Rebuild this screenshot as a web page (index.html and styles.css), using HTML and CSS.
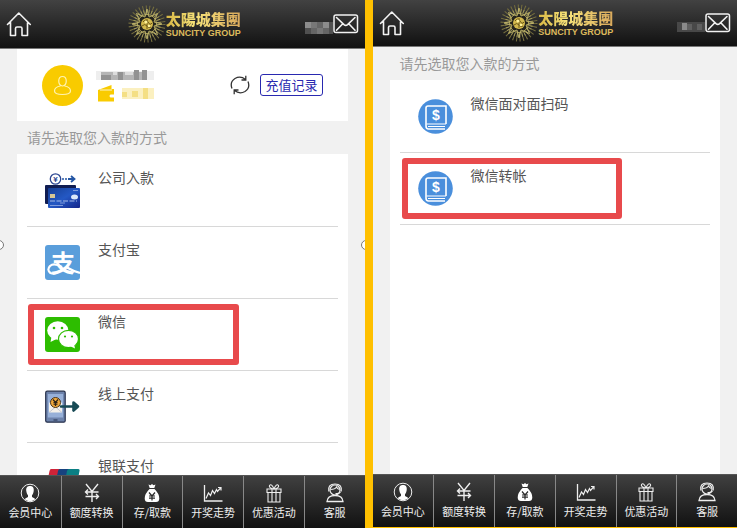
FILE: index.html
```
<!DOCTYPE html>
<html lang="zh-CN">
<head>
	<meta charset="utf-8">
	<meta name="viewport" content="width=device-width, initial-scale=1">
	<title>太陽城集團</title>
	<link rel="stylesheet" href="styles.css">
</head>
<body>
	<!-- shared icons -->
	<svg class="sprite" aria-hidden="true">
		<defs>
			<linearGradient id="card-blue" x1="0" y1="0" x2="1" y2="1">
				<stop offset="0" stop-color="#163f94"/>
				<stop offset="0.5" stop-color="#2458c4"/>
				<stop offset="1" stop-color="#15258a"/>
			</linearGradient>
		</defs>
		<symbol id="home" viewBox="0 0 26 26">
			<path d="M1.5 13.5L12.8 2L24.3 13.5M4.5 11.5V24.5H9.5V17.5Q9.5 16 11 16H14.5Q16 16 16 17.5V24.5H21.5V11.5" fill="none" stroke="#f2f2f2" stroke-width="1.6" stroke-linejoin="round" stroke-linecap="round"/>
		</symbol>
		<symbol id="mail" viewBox="0 0 26 20">
			<rect x="1" y="1" width="23.5" height="17.5" rx="2" fill="none" stroke="#f2f2f2" stroke-width="1.5"/>
			<path d="M3.5 3.5L11 10.6Q12.800 12.200 14.600 10.600L22 3.500M3.500 16.300L9.800 9.800M22 16.300L15.800 9.800" fill="none" stroke="#f2f2f2" stroke-width="1.6" stroke-linecap="round"/>
		</symbol>
		<symbol id="sun" viewBox="0 0 38 38">
			<circle cx="19" cy="19" r="14.500" fill="none" stroke="#756e3e" stroke-width="8" stroke-dasharray="0.900 2.137"/>
			<circle cx="19" cy="19" r="12" fill="none" stroke="#a39a5a" stroke-width="4" stroke-dasharray="0.900 1.613"/>
			<circle cx="19" cy="19" r="9.500" fill="#25241c" stroke="#b5a95f" stroke-width="1"/>
			<path d="M19 4L21 12L29.5 8.5L26 17L34 19L26 21L29.5 29.5L21 26L19 34L17 26L8.5 29.5L12 21L4 19L12 17L8.5 8.5L17 12Z" fill="none" stroke="#c3b86c" stroke-width="0.9"/>
			<circle cx="19" cy="19" r="6" fill="#d2b84c"/>
			<path d="M15 17Q18 13 20 17T24 18M14 21Q17 18 19 21T23 22M19 14V24" fill="none" stroke="#6a5617" stroke-width="1"/>
			<circle cx="18" cy="17" r="1.5" fill="#fff29a"/>
			<circle cx="21" cy="21" r="1.3" fill="#fff29a"/>
		</symbol>
		<symbol id="member" viewBox="0 0 20 20">
			<circle cx="10" cy="10" r="8.800" fill="none" stroke="#eee" stroke-width="1"/>
			<path d="M10 3C6.700 3 6 5.300 6.300 8C6.500 10 7.200 11.200 8 12.200V14L5.200 15.500V16.800Q10 19.500 14.800 16.800V15.500L12 14V12.200C12.800 11.200 13.500 10 13.700 8C14 5.300 13.300 3 10 3Z" fill="#fff"/>
		</symbol>
		<symbol id="exchange" viewBox="0 0 20 20">
			<path d="M4 1L10 8.500L16 1M3.500 9H16.500M3.500 13.500H16.500M10 8.500V19M6 6.500L3.500 9L6 11.500M14 11L16.500 13.500L14 16" fill="none" stroke="#eee" stroke-width="1.400"/>
		</symbol>
		<symbol id="bag" viewBox="0 0 20 20">
			<path d="M6.500 1.500L8.500 2.300L10 1L11.500 2.300L13.500 1.500L12.300 5H7.700Z" fill="#fff"/>
			<path d="M7.500 6H12.500Q17.500 11 17.300 15.500Q17.200 19 14 19H6Q2.800 19 2.700 15.500Q2.500 11 7.500 6Z" fill="#fff"/>
			<path d="M7 9.500L10 13L13 9.500M7 13H13M7 15.200H13M10 13V17.500" fill="none" stroke="#2a2a2a" stroke-width="1.200"/>
		</symbol>
		<symbol id="trend" viewBox="0 0 20 20">
			<path d="M1.500 2V18H19.500" fill="none" stroke="#eee" stroke-width="1.300"/>
			<path d="M3 15.500L5.500 10L7.500 12.500L9.500 7.500L11.500 10.500L13.500 6.500L14.500 8.500L18 4.500M15 4.500H18V7.500" fill="none" stroke="#eee" stroke-width="1.200"/>
		</symbol>
		<symbol id="gift" viewBox="0 0 20 20">
			<path d="M3 6H17V9.500H3ZM4 9.500V19H16V9.500M8 6V19M12 6V19M10 6Q4.500 5 5.500 2.500Q7.500 0 10 6Q12.500 0 14.500 2.500Q15.500 5 10 6" fill="none" stroke="#eee" stroke-width="1.100"/>
		</symbol>
		<symbol id="service" viewBox="0 0 20 20">
			<circle cx="10" cy="7" r="5" fill="none" stroke="#eee" stroke-width="1.200"/>
			<path d="M3.800 8.500Q2.500 1 10 1Q17.500 1 16.200 8.500M5.500 6.500Q10 6.500 11.500 4Q12.500 6 14.500 6.500M15.500 9Q14 11 10.500 10.500" fill="none" stroke="#eee" stroke-width="1.200"/>
			<path d="M2 18.500Q2.500 12.500 10 12.500Q17.500 12.500 18 18.500Z" fill="none" stroke="#eee" stroke-width="1.300"/>
		</symbol>
	</svg>

	<div class="screens">
		<div class="phone">
			<header class="topbar">
				<a href="#" aria-label="首页"><svg class="icon-home"><use href="#home"/></svg></a>
				<div class="logo">
					<svg class="logo-sun"><use href="#sun"/></svg>
					<div class="logo-text">
						<span class="logo-cn">太陽城集團</span>
						<span class="logo-en">SUNCITY GROUP</span>
					</div>
				</div>
				<a href="#" class="inbox" aria-label="消息">
					<svg class="mosaic-top" viewBox="0 0 28 12">
						<rect width="28" height="12" fill="#666"/>
						<path d="M0 0H6V6H0ZM18 0H24V6H18Z" fill="#8c8c8c"/>
						<path d="M6 0H12V6H6ZM12 6H18V12H12Z" fill="#777"/>
						<path d="M0 6H6V12H0ZM24 0H28V12H24Z" fill="#505050"/>
					</svg>
					<svg class="icon-mail"><use href="#mail"/></svg>
				</a>
			</header>

			<main class="content">
				<div class="card profile">
					<svg class="avatar" viewBox="0 0 41 41">
						<circle cx="20.500" cy="20.500" r="20.500" fill="#f9cb00"/>
						<path d="M20.500 11.500C15.500 11.500 15.500 20.500 20.500 21C25.500 20.500 25.500 11.500 20.500 11.500ZM18.500 21Q12.500 22 12.500 26Q12.500 29.500 20.500 29.500Q28.500 29.500 28.500 26Q28.500 22 22.500 21" fill="none" stroke="#fff3b0" stroke-width="1.200"/>
					</svg>
					<div class="account">
						<svg class="mosaic-name" viewBox="0 0 58 12">
							<rect x="0" y="2" width="58" height="9" fill="#eee"/>
							<rect x="5" y="3" width="46" height="8" fill="#b5b5b5"/>
							<path d="M5 6H15V11H5ZM22 3H27V11H22ZM38 1H43V11H38ZM46 1H51V11H46Z" fill="#929292"/>
							<path d="M17 3H21V6H17ZM29 3H37V6H29Z" fill="#dcdcdc"/>
						</svg>
						<div class="balance">
							<svg class="wallet" viewBox="0 0 17 17">
								<path d="M0 5L13.500 0V4H16V9.500H12.500Q10.500 11 12.500 12.500H16V16.500H0Z" fill="#f9cb00"/>
								<path d="M2 5H14" stroke="#fff" stroke-width="0.800"/>
							</svg>
							<svg class="mosaic-amount" viewBox="0 0 32 11">
								<rect width="32" height="11" fill="#fbf0c0"/>
								<path d="M0 4H5V9H0ZM10 3H16V9H10ZM21 0H26V11H21Z" fill="#f4df84"/>
							</svg>
						</div>
					</div>
					<button type="button" class="refresh" aria-label="刷新">
						<svg viewBox="0 0 20 20">
							<path d="M2 13.500Q-0.500 7 5 3.500Q10.500 0.500 15.500 4.500M15.800 0.800V5H11.500M18 6.500Q20.500 13 15 16.500Q9.500 19.500 4.500 15.500M4.200 19.200V15H8.500" fill="none" stroke="#333" stroke-width="1.300"/>
						</svg>
					</button>
					<button type="button" class="record">充值记录</button>
				</div>

				<h2 class="tip">请先选取您入款的方式</h2>

				<ul class="card list">
					<li>
						<a href="#">
							<svg class="pay-icon" viewBox="0 0 35 35">
								<circle cx="10.500" cy="6" r="5.200" fill="#fff" stroke="#2c4691" stroke-width="1.300"/>
								<text x="10.500" y="9" text-anchor="middle" class="icon-yen">¥</text>
								<path d="M17 6H23" fill="none" stroke="#2456a4" stroke-width="1.500" stroke-dasharray="2 1"/>
								<path d="M23 6H29M26 3L29.500 6L26 9" fill="none" stroke="#2456a4" stroke-width="1.800"/>
								<rect x="0" y="12" width="31" height="19" rx="1" fill="#101d52"/>
								<rect x="3" y="15" width="32" height="20" rx="1" fill="url(#card-blue)"/>
								<rect x="5" y="21" width="5" height="4" fill="#d6c695"/>
								<ellipse cx="29.500" cy="24" rx="3.500" ry="2.500" fill="#dce8fa"/>
								<path d="M5 28H32" stroke="#a9bce8" stroke-width="1.200" stroke-dasharray="5 1.500"/>
								<path d="M5 32.500H18M28 17.500H33M15 30H20" stroke="#8aa4df" stroke-width="0.900"/>
							</svg>
							<span>公司入款</span>
						</a>
					</li>
					<li>
						<a href="#">
							<svg class="pay-icon" viewBox="0 0 35 35">
								<rect width="35" height="35" rx="3" fill="#5a9edb"/>
								<text x="18" y="27" text-anchor="middle" class="icon-zhi">支</text>
								<path d="M17 22Q9 17.500 5 21Q1.500 25 5.500 28Q10 30 15 26M22 22.500Q28 26 35 28" fill="none" stroke="#fff" stroke-width="2.200"/>
							</svg>
							<span>支付宝</span>
						</a>
					</li>
					<li>
						<a href="#">
							<svg class="pay-icon" viewBox="0 0 35 35">
								<rect width="35" height="35" rx="3" fill="#2dbd00"/>
								<ellipse cx="12.800" cy="13.500" rx="10.600" ry="9.200" fill="#fff"/>
								<path d="M6.500 19.500L5.500 25L11.500 22Z" fill="#fff"/>
								<ellipse cx="23.500" cy="22" rx="10" ry="8.700" fill="#fff" stroke="#2dbd00" stroke-width="1.200"/>
								<path d="M25 29L30 31.500L29 27Z" fill="#fff"/>
								<circle cx="9" cy="11" r="1.300" fill="#2dbd00"/>
								<circle cx="17" cy="11" r="1.300" fill="#2dbd00"/>
								<circle cx="20" cy="19.500" r="1.100" fill="#2dbd00"/>
								<circle cx="27" cy="19.500" r="1.100" fill="#2dbd00"/>
							</svg>
							<span>微信</span>
						</a>
						<div class="mark"></div>
					</li>
					<li>
						<a href="#">
							<svg class="pay-icon" viewBox="0 0 35 35">
								<rect x="0.700" y="2.200" width="19.500" height="31" rx="1.500" fill="#6d83ac" stroke="#27304b" stroke-width="1.200"/>
								<rect x="2.800" y="5" width="15.300" height="23.500" fill="#97b0d8"/>
								<path d="M4 14L10.500 9L17 14V23.500H4Z" fill="#f4f1ea"/>
								<path d="M4 23.500L10.500 18L17 23.500" fill="none" stroke="#b9bccb" stroke-width="0.800"/>
								<circle cx="10.500" cy="13.500" r="5" fill="#f0a83c" stroke="#47331c" stroke-width="1"/>
								<path d="M8 10.500L10.500 13.500L13 10.500M8.500 13.500H12.500M8.500 15.200H12.500M10.500 13.500V17" fill="none" stroke="#2c2318" stroke-width="1.200"/>
								<path d="M16 17.500H33M28.500 13.500L33 17.500L28.500 21.500Z" fill="#174a55" stroke="#174a55" stroke-width="2.600" stroke-linejoin="round" stroke-linecap="round"/>
								<path d="M8.500 31H12.500" stroke="#27304b" stroke-width="1"/>
							</svg>
							<span>线上支付</span>
						</a>
					</li>
					<li>
						<a href="#">
							<svg class="pay-icon" viewBox="0 0 35 35">
								<path d="M6 8H16L11 30H2Q0 30 1 27L4.500 10Q5 8 6 8Z" fill="#cf2338"/>
								<path d="M15 8H25L20 30H9L13 10Q13.500 8 15 8Z" fill="#17427f"/>
								<path d="M24 8H33Q35 8 34.500 10L31 28Q30.500 30 29 30H18L22 10Q22.500 8 24 8Z" fill="#0b7f84"/>
							</svg>
							<span>银联支付</span>
						</a>
					</li>
				</ul>
			</main>

			<nav class="tabbar">
				<a href="#"><svg><use href="#member"/></svg>会员中心</a>
				<a href="#"><svg><use href="#exchange"/></svg>额度转换</a>
				<a href="#"><svg><use href="#bag"/></svg>存/取款</a>
				<a href="#"><svg><use href="#trend"/></svg>开奖走势</a>
				<a href="#"><svg><use href="#gift"/></svg>优惠活动</a>
				<a href="#"><svg><use href="#service"/></svg>客服</a>
			</nav>

			<i class="handle handle-left"></i>
			<i class="handle handle-right"></i>
		</div>

		<div class="phone phone-second">
			<header class="topbar">
				<a href="#" aria-label="首页"><svg class="icon-home"><use href="#home"/></svg></a>
				<div class="logo">
					<svg class="logo-sun"><use href="#sun"/></svg>
					<div class="logo-text">
						<span class="logo-cn">太陽城集團</span>
						<span class="logo-en">SUNCITY GROUP</span>
					</div>
				</div>
				<a href="#" class="inbox" aria-label="消息">
					<svg class="mosaic-top" viewBox="0 0 28 12">
						<rect y="1" width="28" height="10" fill="#484848"/>
						<path d="M5 2H10V9H5Z" fill="#8a8a8a"/>
						<path d="M10 3H15V9H10ZM20 3H25V9H20Z" fill="#606060"/>
					</svg>
					<svg class="icon-mail"><use href="#mail"/></svg>
				</a>
			</header>

			<main class="content">
				<h2 class="tip">请先选取您入款的方式</h2>

				<ul class="card list">
					<li>
						<a href="#">
							<svg class="pay-icon" viewBox="0 0 35 35">
								<circle cx="17.500" cy="17.500" r="17.300" fill="#4a8fdc"/>
								<path d="M28 25V7H10Q8 7 8 9V27Q8 30 10.500 30H27" fill="none" stroke="#fff" stroke-width="1.600"/>
								<path d="M8.500 25H28M10 27.500H27" fill="none" stroke="#fff" stroke-width="1.100"/>
								<text x="18" y="21" text-anchor="middle" class="icon-dollar">$</text>
							</svg>
							<span>微信面对面扫码</span>
						</a>
					</li>
					<li>
						<a href="#">
							<svg class="pay-icon" viewBox="0 0 35 35">
								<circle cx="17.500" cy="17.500" r="17.300" fill="#4a8fdc"/>
								<path d="M28 25V7H10Q8 7 8 9V27Q8 30 10.500 30H27" fill="none" stroke="#fff" stroke-width="1.600"/>
								<path d="M8.500 25H28M10 27.500H27" fill="none" stroke="#fff" stroke-width="1.100"/>
								<text x="18" y="21" text-anchor="middle" class="icon-dollar">$</text>
							</svg>
							<span>微信转帐</span>
						</a>
						<div class="mark mark-wide"></div>
					</li>
				</ul>
			</main>

			<nav class="tabbar">
				<a href="#"><svg><use href="#member"/></svg>会员中心</a>
				<a href="#"><svg><use href="#exchange"/></svg>额度转换</a>
				<a href="#"><svg><use href="#bag"/></svg>存/取款</a>
				<a href="#"><svg><use href="#trend"/></svg>开奖走势</a>
				<a href="#"><svg><use href="#gift"/></svg>优惠活动</a>
				<a href="#"><svg><use href="#service"/></svg>客服</a>
			</nav>
		</div>
	</div>
</body>
</html>
```
FILE: styles.css
```
* {
	box-sizing: border-box;
}

body {
	margin: 0;
	font-family: "Noto Sans CJK SC", "Noto Sans", sans-serif;
	font-size: 14px;
	color: #555;
	background-color: #ffc000;
}

a {
	color: inherit;
	text-decoration: none;
}

svg {
	display: block;
}

.sprite {
	position: absolute;
	width: 0;
	height: 0;
}

.screens {
	display: grid;
	grid-template-columns: 1fr 1fr;
	gap: 8px;
	height: 100vh;
}

.phone {
	position: relative;
	display: flex;
	flex-direction: column;
	min-width: 0;
	min-height: 0;
	overflow: hidden;
	background-color: #f1f1f1;
}
.phone-second {
	margin-bottom: 1px;
}

/* header */
.topbar {
	display: grid;
	grid-template-columns: 1fr auto 1fr;
	align-items: center;
	flex-shrink: 0;
	height: 49px;
	padding: 0 6px;
	border-bottom: 1px solid #777;
	background: linear-gradient(#424242, #111);
}
.phone-second .topbar {
	height: 47px;
}
.icon-home {
	width: 26px;
	height: 26px;
}
.icon-mail {
	width: 26px;
	height: 20px;
}
.inbox {
	display: flex;
	align-items: center;
	justify-content: flex-end;
}
.mosaic-top {
	width: 28px;
	height: 12px;
	margin-top: 8px;
}

.logo {
	display: flex;
	align-items: center;
	margin-left: 4px;
}
.logo-sun {
	width: 38px;
	height: 38px;
}
.logo-text {
	display: flex;
	flex-direction: column;
	align-items: center;
	white-space: nowrap;
}
.logo-cn {
	font-family: "Noto Sans CJK TC", sans-serif;
	font-size: 15px;
	font-weight: 900;
	line-height: 18px;
	background: linear-gradient(90deg, #d8b845, #f6e27a 40%, #d9a95c);
	-webkit-background-clip: text;
	background-clip: text;
	color: transparent;
}
.logo-en {
	font-family: "Liberation Sans", sans-serif;
	font-size: 9px;
	font-weight: bold;
	line-height: 10px;
	color: #dcb95c;
}

/* page body */
.content {
	display: flex;
	flex-direction: column;
	flex: 1;
	min-height: 0;
	overflow: hidden;
}

.card {
	margin: 0 17px;
	background-color: #fff;
}

.profile {
	display: flex;
	align-items: center;
	flex-shrink: 0;
	height: 72px;
	padding: 0 25px;
}
.avatar {
	width: 41px;
	height: 41px;
}
.account {
	margin: 0 auto 0 13px;
}
.mosaic-name {
	width: 58px;
	height: 12px;
}
.balance {
	display: flex;
	align-items: center;
	gap: 7px;
	margin: 4px 0 0 2px;
}
.wallet {
	width: 17px;
	height: 17px;
}
.mosaic-amount {
	width: 32px;
	height: 11px;
}

.refresh {
	width: 20px;
	height: 20px;
	margin-right: 10px;
	padding: 0;
	border: 0;
	background: none;
}
.record {
	height: 22px;
	padding: 0 4px;
	border: 1px solid #2929b0;
	border-radius: 3px;
	background-color: #fff;
	color: #2929b0;
	font-family: inherit;
	font-size: 13px;
	line-height: 20px;
}

.tip {
	flex-shrink: 0;
	margin: 0;
	padding-left: 27px;
	font-size: 14px;
	font-weight: normal;
	line-height: 33px;
	color: #999;
}

.list {
	flex: 1 0 auto;
	padding: 1px 10px 0;
	list-style: none;
}
.list li {
	position: relative;
	height: 72px;
	border-bottom: 1px solid #d8d8d8;
}
.list li > a {
	display: flex;
	gap: 18px;
	padding: 18px 18px 0;
}
.list li span {
	margin-top: -6px;
	line-height: 20px;
}
.pay-icon {
	width: 35px;
	height: 35px;
}
.icon-yen {
	font-family: "Liberation Sans", sans-serif;
	font-size: 8px;
	font-weight: bold;
	fill: #2c4691;
}
.icon-dollar {
	font-family: "Liberation Sans", sans-serif;
	font-size: 14px;
	font-weight: bold;
	fill: #fff;
}
.icon-zhi {
	font-size: 24px;
	font-weight: bold;
	fill: #fff;
}

/* red frame over the chosen way to pay */
.mark {
	position: absolute;
	top: 5px;
	left: 1px;
	width: 211px;
	height: 61px;
	border: 6px solid #e84a4c;
	border-radius: 3px;
	pointer-events: none;
}
.mark-wide {
	left: 2px;
	width: 220px;
}

.handle {
	position: absolute;
	top: 240px;
	width: 10px;
	height: 10px;
	border: 1px solid #777;
	border-radius: 50%;
	background-color: #fff;
}
.handle-left {
	left: -6px;
}
.handle-right {
	right: -6px;
}

/* bottom menu */
.tabbar {
	display: grid;
	grid-template-columns: repeat(6, 1fr);
	flex-shrink: 0;
	height: 53px;
	border-top: 1px solid #555;
	background: linear-gradient(#404040, #111);
}
.tabbar a {
	display: flex;
	flex-direction: column;
	align-items: center;
	padding-top: 7px;
	border-left: 1px solid #888;
	color: #eee;
	font-size: 11px;
	line-height: 18px;
	white-space: nowrap;
}
.tabbar a:first-child {
	border-left: 0;
}
.tabbar svg {
	width: 20px;
	height: 20px;
}
```
